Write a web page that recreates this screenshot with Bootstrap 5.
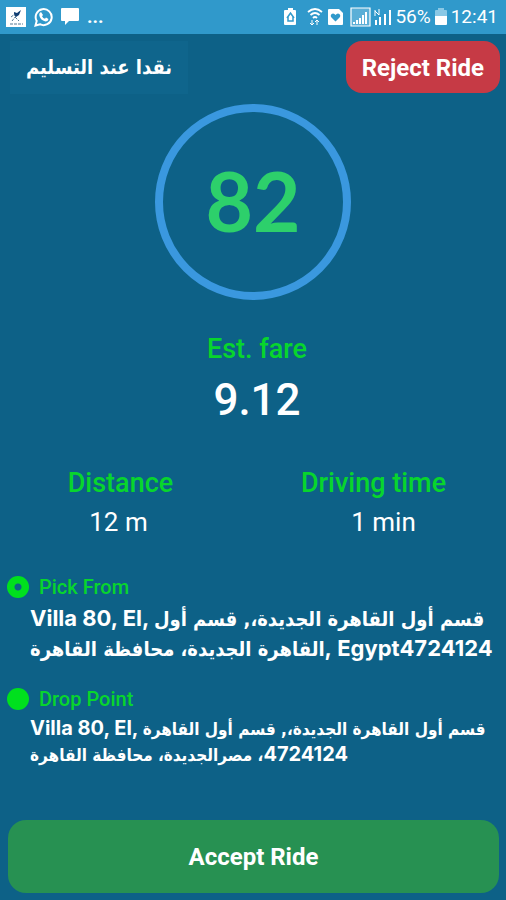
<!DOCTYPE html>
<html lang="en">
<head>
<meta charset="utf-8">
<meta name="viewport" content="width=device-width, initial-scale=1">
<title>Ride request</title>
<link href="https://cdn.jsdelivr.net/npm/bootstrap@5.3.0/dist/css/bootstrap.min.css" rel="stylesheet">
<style>
body { background: #0d6187; color: #fff; font-family: Roboto, "DejaVu Sans", sans-serif; }
.status-bar { background: #3099cb; height: 34px; font-size: 19px; line-height: 34px; padding: 0 8px 0 6px; }
.status-bar svg { display: block; flex: none; }
.top-row { padding: 7px 6px 0 10px; }
.pay-tag { background: #0f658c; color: #fff; width: 178px; height: 53px; font: bold 20px/53px "DejaVu Sans Condensed", "DejaVu Sans", sans-serif; text-align: center; }
.btn-reject { background: #c63a45; color: #fff; border-radius: 16px; height: 52px; padding: 0 16px; font-size: 24px; font-weight: 700; line-height: 54px; }
.timer { width: 196px; height: 196px; border: 8px solid #3a98df; border-radius: 50%; margin: 10px auto 0; color: #2dd06b; font-family: Lato, sans-serif; font-size: 82px; font-weight: 700; line-height: 1; padding-bottom: 4px; }
.caption { color: #08d52d; font-size: 27px; font-weight: 500; line-height: 34px; }
.fare { font-size: 44px; font-weight: 500; line-height: 48px; margin-top: 10px; }
.figure-value { font-size: 26px; line-height: 32px; margin-top: 6px; }
.figures { padding-top: 18px; }
.stops { padding: 37px 0 0 7px; }
.stop-name { color: #08d52d; font-size: 20px; font-weight: 500; line-height: 24px; gap: 10px; }
.dot { width: 22px; height: 22px; border-radius: 50%; background: #00e01e; }
.dot-ring { background: radial-gradient(circle, #0d6187 3px, #00e01e 4px); }
.address { padding-left: 23px; font-family: Inter, "DejaVu Sans", sans-serif; font-weight: 700; white-space: nowrap; }
.address [lang=ar] { font-family: "DejaVu Sans Condensed", "DejaVu Sans", sans-serif; line-height: 1; }
.address-lg { font-size: 22px; line-height: 30px; margin-top: 4px; }
.address-lg [lang=ar] { font-size: 20px; }
.address-sm { font-size: 20px; line-height: 26px; margin-top: 4px; }
.address-sm bdi { line-height: 1; }
.address-sm [lang=ar] { font-size: 17px; }
.btn-accept { background: #279152; color: #fff; border-radius: 18px; height: 73px; font-size: 24px; font-weight: 700; }
.accept-bar { padding: 0 7px 7px 8px; }
.btn-reject:hover, .btn-accept:hover { background: #1f7d45; color: #fff; }
</style>
</head>
<body>
<div class="d-flex flex-column min-vh-100">
  <header class="status-bar d-flex align-items-center justify-content-between">
    <div class="d-flex align-items-center gap-2">
      <svg width="20" height="20" viewBox="0 0 20 20" aria-hidden="true"><path fill="#fff" d="M0 0h20v20H0z"/><path fill="#123e73" d="M8 5l3 1 4-3-2 5-3 2-2-2z"/><path d="M10 9l-4 5M9 10l4 4M5 10l4-3M4 17h13" stroke="#547994" fill="none" stroke-dasharray="3 1"/></svg>
      <svg width="19" height="20" viewBox="0 0 19 20" aria-hidden="true"><path d="M1.500 18.500l1.200-4.500A8 8 0 1 1 6 17.200z" fill="none" stroke="#fff" stroke-width="2"/><path d="M7 5l2 3-1 1.300q1 2 3 2.500l1-1.300 2.500 1.500q-.5 2.500-3 2.500Q6 13 5.200 8 5 6 7 5z" fill="#fff"/></svg>
      <svg width="18" height="18" viewBox="0 0 18 18" aria-hidden="true"><path d="M1 0h16q1 0 1 1v11q0 1-1 1H8l-4 4v-4H1q-1 0-1-1V1q0-1 1-1z" fill="#fff"/></svg>
      <span class="fw-bold">...</span>
    </div>
    <div class="d-flex align-items-center">
      <svg class="me-1" width="108" height="22" viewBox="0 0 108 22" aria-hidden="true">
        <path fill="#fff" d="M3 4h2V2h5v2h2q1 0 1 1v13q0 1-1 1H2q-1 0-1-1V5q0-1 1-1z"/><path d="M4 12l3.500-5 3.500 5M5 11v4h5v-4" fill="none" stroke="#3099cb" stroke-width="1.500"/>
        <path d="M25 6q7-6 14 0M27.500 9q4.500-4 9 0M30 12q2-2 4 0" fill="none" stroke="#fff" stroke-width="1.800"/><path d="M29 14v5M27 17l2 2 2-2M34 19v-5M32 16l2-2 2 2" fill="none" stroke="#fff"/>
        <path fill="#fff" d="M46 3h10l4 4v11q0 1-1 1H46q-1 0-1-1V4q0-1 1-1z"/><path fill="#3099cb" d="M52.500 15.500L48 11q-1-3 2-3.500 1.500 0 2.500 1.500 1-1.500 2.500-1.500 3 .5 2 3.500z"/>
        <path fill="#5bafd7" stroke="#fff" stroke-width="1.200" d="M68 2h19v18H68z"/><path d="M71 18v-2M74 18v-4M77 18v-6M80 18V9M83 18V6" stroke="#fff" stroke-width="2"/>
        <path d="M93 19v-5M97 19v-8M102 19V8M107 19V4" stroke="#fff" stroke-width="2"/><path d="M92 4v6M92 5l4 4M96 3v6" stroke="#fff" fill="none"/>
      </svg>
      <span>56%</span>
      <svg class="mx-1" width="12" height="18" viewBox="0 0 12 18" aria-hidden="true"><path fill="#8ac8e5" d="M3 2V0h6v2h2q1 0 1 1v6H0V3q0-1 1-1z"/><path fill="#fff" d="M0 8h12v8q0 1-1 1H1q-1 0-1-1z"/></svg>
      <span>12:41</span>
    </div>
  </header>

  <main class="flex-grow-1 d-flex flex-column">
    <div class="top-row d-flex justify-content-between align-items-start">
      <div class="pay-tag" lang="ar" dir="rtl">نقدا عند التسليم</div>
      <button type="button" class="btn btn-reject border-0">Reject Ride</button>
    </div>

    <div class="timer d-flex align-items-center justify-content-center" role="timer">82</div>

    <section class="text-center pt-4 mt-2 ps-2">
      <div class="caption">Est. fare</div>
      <div class="fare">9.12</div>
    </section>

    <section class="figures row g-0 text-center mt-4">
      <div class="col-6 pe-2">
        <div class="caption pe-1">Distance</div>
        <div class="figure-value pe-2">12 m</div>
      </div>
      <div class="col-6 pe-3">
        <div class="caption ps-1">Driving time</div>
        <div class="figure-value ps-4">1 min</div>
      </div>
    </section>

    <div class="stops">
      <section>
        <div class="stop-name d-flex align-items-center"><span class="dot dot-ring"></span>Pick From</div>
        <div class="address address-lg">
          <div>Villa 80, El, <span lang="ar">قسم أول القاهرة الجديدة،, قسم أول</span></div>
          <div><span lang="ar">القاهرة الجديدة، محافظة القاهرة</span>, Egypt4724124</div>
        </div>
      </section>

      <section class="pt-4">
        <div class="stop-name d-flex align-items-center"><span class="dot"></span>Drop Point</div>
        <div class="address address-sm">
          <div>Villa 80, El, <span lang="ar">قسم أول القاهرة الجديدة،, قسم أول القاهرة</span></div>
          <div><bdi dir="rtl">4724124<span lang="ar">، مصرالجديدة، محافظة القاهرة</span></bdi></div>
        </div>
      </section>
    </div>

    <div class="accept-bar mt-auto"><button type="button" class="btn btn-accept border-0 w-100">Accept Ride</button></div>
  </main>
</div>
<script src="https://cdn.jsdelivr.net/npm/bootstrap@5.3.0/dist/js/bootstrap.bundle.min.js"></script>
</body>
</html>
